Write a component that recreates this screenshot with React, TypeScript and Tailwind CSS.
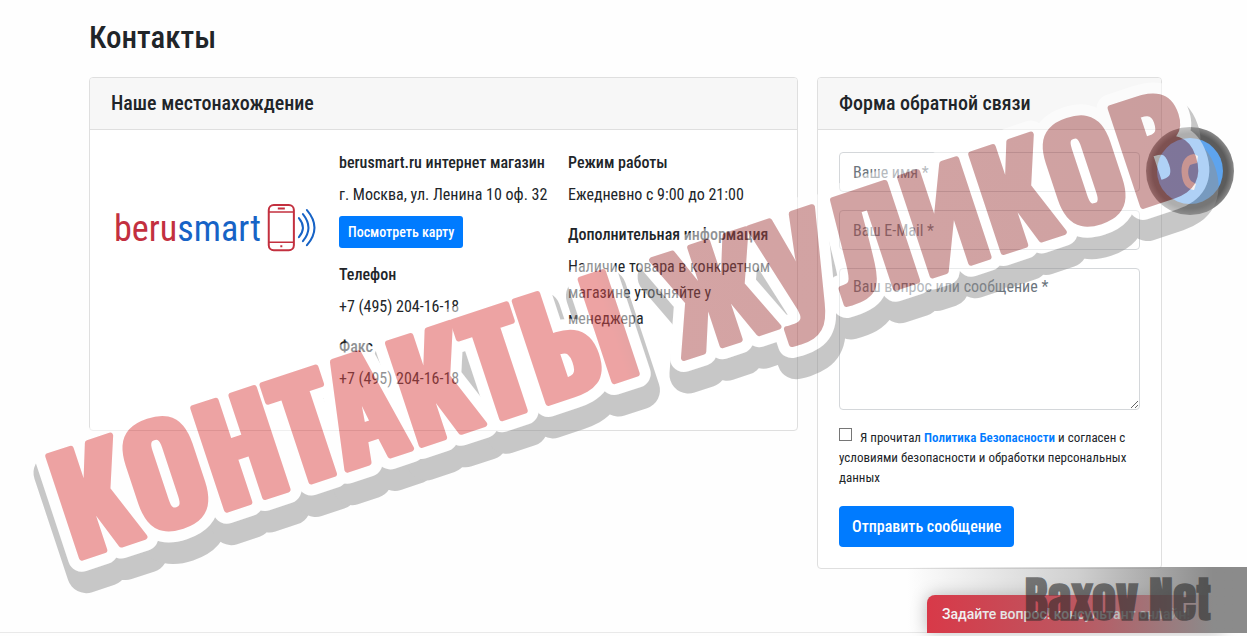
import type { ReactNode } from 'react';

function Card({ title, children }: { title: string; children: ReactNode }) {
  return (
    <section className="overflow-hidden rounded border border-[#dfdfdf] bg-white">
      <h2 className="border-b border-[#dfdfdf] bg-[#f7f7f7] px-[21px] py-3 text-xl leading-[27px] font-medium">
        {title}
      </h2>
      {children}
    </section>
  );
}

function Info({ title, children }: { title: string; children: ReactNode }) {
  return (
    <div className="mb-3.5">
      <h3 className="mb-1.5 font-medium whitespace-nowrap">{title}</h3>
      {children}
    </div>
  );
}

function Logo() {
  return (
    <svg viewBox="0 0 208 56" className="mt-[50px] w-full" role="img" aria-label="berusmart">
      <text x="4" y="41" fontSize="36" fontFamily='"Roboto Condensed", sans-serif' fill="#c3303f">
        beru<tspan fill="#1763c6">smart</tspan>
      </text>
      <g fill="none" stroke="#c3303f" strokeWidth="2">
        <rect x="158" y="5" width="25" height="45" rx="5" />
        <path d="M158 12h25M158 42h25" strokeWidth="1.5" />
        <path d="M167 8.5h7M169.500 46h2" />
      </g>
      <g fill="none" stroke="#1763c6" strokeWidth="2" strokeLinecap="round">
        <path d="M188 18q8 9.500 0 19" />
        <path d="M192 14q11 13.500 0 27" />
        <path d="M196 10q15 17.500 0 35" />
      </g>
    </svg>
  );
}

function CallButton() {
  return (
    <button
      type="button"
      aria-label="Позвонить"
      className="absolute top-[127px] right-[13px] flex size-[88px] items-center justify-center rounded-full bg-radial from-[#5c5c5c] from-60% to-[#868686] to-70%"
    >
      <svg viewBox="0 0 66 66" className="size-[66px]">
        <circle cx="33" cy="33" r="33" fill="#5ea4ee" />
        <path
          d="M37 16c-10 1-14 11-12 22 1 8 5 13 12 14l2-6-5-3c-3-4-4-11-1-16l3-1 4-1 1-7z"
          fill="#f3e6e0"
        />
      </svg>
    </button>
  );
}

function Stamp() {
  return (
    <svg
      viewBox="0 0 1247 636"
      width="1247"
      height="636"
      className="pointer-events-none absolute top-0 left-0 opacity-50"
    >
      <defs>
        <linearGradient id="ink" gradientUnits="userSpaceOnUse" x1="0" y1="0" x2="1180" y2="0">
          <stop offset="0.49" stopColor="#dd4949" />
          <stop offset="0.53" stopColor="#ab4b4b" />
          <stop offset="1" stopColor="#9f4747" />
        </linearGradient>
      </defs>
      <g transform="translate(78 560) rotate(-18.350)" strokeLinejoin="round">
        <use href="#stamp" x="-1" y="17" fill="#919191" stroke="#919191" strokeWidth="38" />
        <use href="#stamp" fill="#ffffff" stroke="#ffffff" strokeWidth="28" />
        <g fill="url(#ink)" stroke="url(#ink)" strokeWidth="6">
          <text id="stamp" x="-4" y="-1" fontSize="132" fontWeight="700" fontFamily="Oswald, sans-serif">
            КОНТАКТЫ{' '}
            <tspan x="638" fontSize="127">
              ЖУЛИКОВ
            </tspan>
          </text>
        </g>
      </g>
    </svg>
  );
}

export default function App() {
  const field =
    'block w-full rounded border border-[#d4d7da] bg-white px-[13px] text-base placeholder:text-[#6c757d] placeholder:opacity-100';
  return (
    <div className="relative min-h-screen overflow-hidden bg-[#fefefe] font-['Roboto_Condensed',Roboto,sans-serif] text-base leading-[26px] text-[#212529]">
      <main className="pt-[18px] pr-[85px] pl-[89px]">
        <h1 className="mb-[19px] text-[31px] leading-10 font-medium">Контакты</h1>
        <div className="grid grid-cols-[709fr_345fr] items-start gap-[19px]">
          <Card title="Наше местонахождение">
            <div className="grid grid-cols-3 gap-5 px-5 pt-5 pb-6">
              <Logo />
              <div>
                <Info title="berusmart.ru интернет магазин">
                  <p className="whitespace-nowrap">г. Москва, ул. Ленина 10 оф. 32</p>
                  <button
                    type="button"
                    className="mt-2 block h-8 rounded-[3px] bg-[#007bff] px-[9px] text-sm font-medium text-white"
                  >
                    Посмотреть карту
                  </button>
                </Info>
                <Info title="Телефон">
                  <p>+7 (495) 204-16-18</p>
                </Info>
                <Info title="Факс">
                  <p>+7 (495) 204-16-18</p>
                </Info>
              </div>
              <div>
                <Info title="Режим работы">
                  <p>Ежедневно с 9:00 до 21:00</p>
                </Info>
                <Info title="Дополнительная информация">
                  <p>Наличие товара в конкретном магазине уточняйте у менеджера</p>
                </Info>
              </div>
            </div>
          </Card>
          <Card title="Форма обратной связи">
            <form className="flex flex-col gap-[18px] px-[21px] pt-[22px] pb-[21px]">
              <input aria-label="Ваше имя" placeholder="Ваше имя *" className={`${field} h-10`} />
              <input
                type="email"
                aria-label="Ваш E-Mail"
                placeholder="Ваш E-Mail *"
                className={`${field} h-10`}
              />
              <textarea
                aria-label="Ваш вопрос или сообщение"
                placeholder="Ваш вопрос или сообщение *"
                className={`${field} h-[142px] resize-y py-1.5`}
              />
              <div className="text-[13px] leading-5">
                <input
                  type="checkbox"
                  id="agree"
                  className="mr-2 size-[13px] appearance-none border border-[#767676] bg-white align-[1px] checked:bg-[#007bff]"
                />
                <label htmlFor="agree">
                  Я прочитал{' '}
                  <a href="#policy" className="font-semibold text-[#007bff]">
                    Политика Безопасности
                  </a>{' '}
                  и согласен с условиями безопасности и обработки персональных данных
                </label>
              </div>
              <button
                type="submit"
                className="h-[41px] self-start rounded bg-[#007bff] px-[13px] text-base font-medium text-white"
              >
                Отправить сообщение
              </button>
            </form>
          </Card>
        </div>
      </main>
      <div className="absolute bottom-[3px] left-0 h-px w-full bg-[#e9e9e9]" />
      <button
        type="button"
        className="absolute right-6 bottom-[3px] h-[38px] w-[296px] rounded-t-lg bg-[#dc3545] px-[15px] text-left font-[Roboto,sans-serif] text-sm font-medium whitespace-nowrap text-white shadow-[0_0_16px_rgba(0,0,0,0.25)]"
      >
        Задайте вопрос! консультант онлайн!
      </button>
      <CallButton />
      <Stamp />
      <div className="pointer-events-none absolute right-0 bottom-[3px] flex h-[66px] w-[340px] items-center justify-end bg-linear-to-r from-[#8b8b8b]/0 via-[#8b8b8b]/40 to-[#8b8b8b] to-90% pr-9 font-[Anton,Oswald,sans-serif] text-5xl leading-[66px] font-bold text-[#2b2b2b]/60">
        Baxov.Net
      </div>
    </div>
  );
}
